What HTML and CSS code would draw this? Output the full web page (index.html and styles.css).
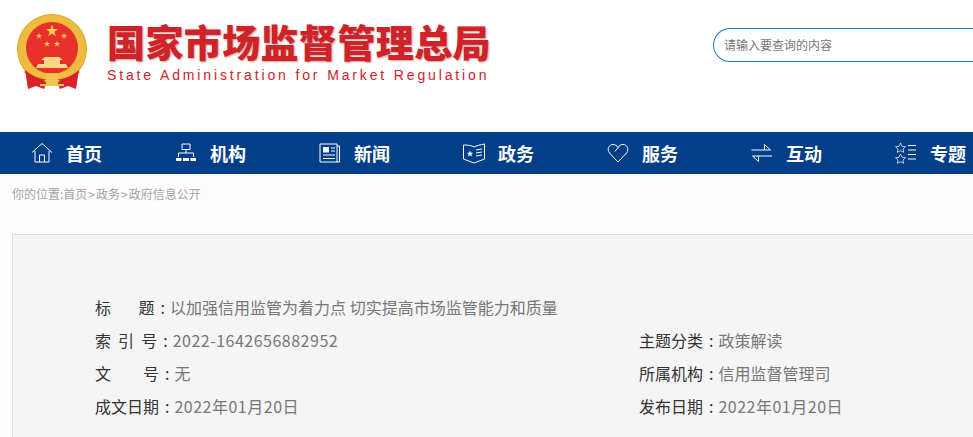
FILE: index.html
```html
<!DOCTYPE html>
<html lang="zh-CN">
<head>
  <meta charset="UTF-8">
  <meta name="viewport" content="width=device-width, initial-scale=1.0">
  <title>以加强信用监管为着力点 切实提高市场监管能力和质量</title>
  <link rel="stylesheet" href="styles.css">
</head>
<body>
  <div class="page">
    <header class="header">
      <svg class="emblem" viewBox="0 0 72 76" aria-hidden="true">
        <defs>
          <polygon id="star" points="0,-1 .223,-.307 .951,-.309 .361,.117 .588,.809 0,.38 -.588,.809 -.361,.117 -.951,-.309 -.223,-.307"/>
        </defs>
        <circle cx="36" cy="35" r="34.500" fill="#eebb3c" stroke="#dfa02c" stroke-width="1"/>
        <circle cx="36" cy="34" r="26" fill="#e8302a"/>
        <g fill="#f8d04c">
          <use href="#star" transform="translate(36 17) scale(6.500)"/>
          <use href="#star" transform="translate(23 22) scale(3.300)"/>
          <use href="#star" transform="translate(48 22) scale(3.300)"/>
          <use href="#star" transform="translate(31 30) scale(3.300)"/>
          <use href="#star" transform="translate(41 30) scale(3.300)"/>
        </g>
        <g fill="#f8d886">
          <path d="M25 46 L29 43 H43 L47 46 Z"/>
          <rect x="28" y="46" width="16" height="4"/>
          <path d="M22 50 H50 L52 54 H20 Z"/>
        </g>
        <path d="M9 54 C18 61 54 61 63 54 L64 59 C54 64 18 64 8 59 Z" fill="#efbe45"/>
        <path d="M9 56 L12 75 L20 72 L28 75 L32 66 C24 65 16 62 9 56 Z" fill="#d9232a"/>
        <path d="M63 56 L60 75 L52 72 L44 75 L40 66 C48 65 56 62 63 56 Z" fill="#d9232a"/>
        <g fill="#f2c64e">
          <ellipse cx="36" cy="63" rx="7" ry="4"/>
          <path d="M28 66 H44 L41 70 H31 Z"/>
          <rect x="24" y="70" width="24" height="2"/>
        </g>
      </svg>
      <div class="brand">
        <div class="brand-cn">国家市场监督管理总局</div>
        <div class="brand-en">State Administration for Market Regulation</div>
      </div>
      <div class="search">请输入要查询的内容</div>
    </header>

    <nav class="nav">
      <a class="nav-item" href="#">
        <svg class="nav-icon" viewBox="0 0 22 22" aria-hidden="true"><path d="M1 10.500 L11 1.500 L21 10.500 M4 9 V20 H18 V9 M8.500 20 V13 H13.500 V20"/></svg>
        <span>首页</span>
      </a>
      <a class="nav-item" href="#">
        <svg class="nav-icon" viewBox="0 0 22 22" aria-hidden="true">
          <path d="M7 2 H15 V7.500 H7 Z M11 7.500 V11 M3.500 15 V11 H18.500 V15"/>
          <path class="solid" d="M1 16 H6.500 V19 H1 Z M8 16 H14 V19 H8 Z M15.500 16 H21 V19 H15.500 Z"/>
        </svg>
        <span>机构</span>
      </a>
      <a class="nav-item" href="#">
        <svg class="nav-icon" viewBox="0 0 22 22" aria-hidden="true">
          <path d="M1 2 H18 V20 H1 Z M18 4 H20.500 V20 H18 M12 6 H16 M12 9 H16 M4 13 H16 M4 16.500 H16"/>
          <path class="solid" d="M4 5 H10 V10.500 H4 Z"/>
        </svg>
        <span>新闻</span>
      </a>
      <a class="nav-item" href="#">
        <svg class="nav-icon" viewBox="0 0 22 22" aria-hidden="true">
          <path d="M0.500 3 C5 3 8.500 3.500 11 5 C13.500 3.500 17 3 21.500 2 V17 L11 21 L0.500 17 Z M13 8 L19 7 M13 11 L19 10 M13 14 L19 13"/>
          <polygon class="solid" points="7,8.500 7.900,10.700 10.200,10.800 8.400,12.300 9,14.500 7,13.300 5,14.500 5.600,12.300 3.800,10.800 6.100,10.700"/>
        </svg>
        <span>政务</span>
      </a>
      <a class="nav-item" href="#">
        <svg class="nav-icon" viewBox="0 0 22 22" aria-hidden="true"><path d="M11 20 L2.500 11 C-0.500 7 2 2.500 6 2.500 C8 2.500 10 3.500 11 5.500 L8 9.500 M11 5.500 C12 3.500 14 2.500 16 2.500 C20 2.500 22.500 7 19.500 11 L11 20"/></svg>
        <span>服务</span>
      </a>
      <a class="nav-item" href="#">
        <svg class="nav-icon" viewBox="0 0 22 22" aria-hidden="true"><path d="M0.500 8 H19.500 L13.500 2.500 V8 M21 14 H1.500 L7.500 19.500 V14"/></svg>
        <span>互动</span>
      </a>
      <a class="nav-item" href="#">
        <svg class="nav-icon" viewBox="0 0 22 22" aria-hidden="true">
          <path class="dim" d="M5.500 1 L7 4.300 L10.500 4.700 L8 7 L8.700 10.300 L5.500 8.700 L2.300 10.300 L3 7 L0.500 4.700 L4 4.300 Z M5.500 12 L7 15.300 L10.500 15.700 L8 18 L8.700 21.300 L5.500 19.700 L2.300 21.300 L3 18 L0.500 15.700 L4 15.300 Z"/>
          <path d="M13 3.500 H21 M13 8 H21 M13 12.500 H21 M13 17 H21"/>
        </svg>
        <span>专题</span>
      </a>
    </nav>

    <main class="main">
      <div class="crumbs">你的位置:首页<span class="sep">&gt;</span>政务<span class="sep">&gt;</span>政府信息公开</div>
      <section class="info">
        <div class="info-row info-wide">
          <span class="label">标&emsp;&ensp;&nbsp;题</span><span class="colon">:</span><span class="value">以加强信用监管为着力点 切实提高市场监管能力和质量</span>
        </div>
        <div class="info-row">
          <span class="label label-spaced">索 引 号</span><span class="colon">:</span><span class="value num">2022-1642656882952</span>
        </div>
        <div class="info-row">
          <span class="label">主题分类</span><span class="colon">:</span><span class="value">政策解读</span>
        </div>
        <div class="info-row">
          <span class="label">文&emsp;&emsp;号</span><span class="colon">:</span><span class="value">无</span>
        </div>
        <div class="info-row">
          <span class="label">所属机构</span><span class="colon">:</span><span class="value">信用监督管理司</span>
        </div>
        <div class="info-row">
          <span class="label">成文日期</span><span class="colon">:</span><span class="value num">2022年01月20日</span>
        </div>
        <div class="info-row">
          <span class="label">发布日期</span><span class="colon">:</span><span class="value num">2022年01月20日</span>
        </div>
      </section>
    </main>
  </div>
</body>
</html>
```

FILE: styles.css
```css
* {
  margin: 0;
  padding: 0;
  box-sizing: border-box;
}

html,
body {
  height: 100%;
  overflow: hidden;
}

body {
  font-family: "Noto Sans CJK SC", "Liberation Sans", sans-serif;
  background: #fff;
}

.header {
  height: 132px;
  display: flex;
  align-items: flex-start;
  padding: 14px 0 0 16px;
  background: #fff;
}

.emblem {
  width: 72px;
  height: 76px;
  flex-shrink: 0;
}

.brand {
  margin-left: 19px;
  padding-top: 7px;
}

.brand-cn {
  font-size: 38px;
  line-height: 40px;
  font-weight: 900;
  letter-spacing: 0.4px;
  color: #cf2329;
  text-shadow: 1px 1px 2px rgba(120, 0, 0, 0.4);
  white-space: nowrap;
}

.brand-en {
  margin-top: 5px;
  font-family: "Liberation Sans", sans-serif;
  font-size: 14px;
  line-height: 18px;
  letter-spacing: 2.86px;
  color: #cf2329;
  white-space: nowrap;
}

.search {
  flex: 0 0 260px;
  height: 34px;
  margin: 14px 0 0 auto;
  padding-left: 10px;
  border: 1px solid #1f7cc7;
  border-right: 0;
  border-radius: 17px 0 0 17px;
  font-size: 12px;
  line-height: 32px;
  color: #777;
}

.nav {
  height: 42px;
  display: flex;
  padding-left: 31px;
  background: #033e89;
}

.nav-item {
  width: 144px;
  display: flex;
  align-items: center;
  gap: 13px;
  flex-shrink: 0;
  color: #fff;
  font-size: 18px;
  font-weight: 700;
  text-decoration: none;
}

.nav-item:last-child {
  width: auto;
}

.nav-icon {
  width: 22px;
  height: 22px;
  fill: none;
  stroke: #fff;
  stroke-width: 1;
  flex-shrink: 0;
}

.nav-icon .solid {
  fill: #fff;
  stroke: none;
}

.nav-icon .dim {
  stroke-opacity: 0.7;
}

.main {
  padding: 11px 0 0 12px;
  background: #fdfdfd;
}

.crumbs {
  height: 49px;
  font-size: 12px;
  line-height: 18px;
  color: #a3a3a8;
}

.sep {
  margin: 0 1px;
}

.info {
  display: grid;
  grid-template-columns: 544px 1fr;
  grid-auto-rows: 33px;
  height: 203px;
  padding: 56px 0 0 82px;
  background: #f5f5f5;
  border: 1px solid #d5e0ee;
  border-width: 1px 0 0 1px;
}

.info-wide {
  grid-column: 1 / -1;
}

.info-row {
  font-size: 16px;
  line-height: 33px;
  white-space: nowrap;
}

.label {
  color: #333;
}

.label-spaced {
  word-spacing: 3.5px;
}

.colon {
  margin: 0 5px 0 6px;
  color: #333;
}

.value {
  color: #777;
}

.num {
  letter-spacing: 0.5px;
}
```
